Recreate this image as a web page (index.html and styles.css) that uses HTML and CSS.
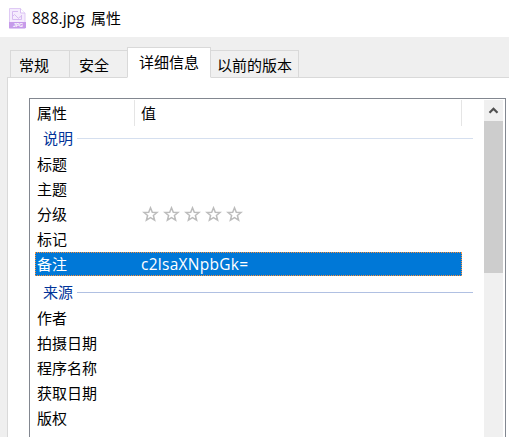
FILE: index.html
```html
<!DOCTYPE html>
<html lang="zh-CN">
<head>
<meta charset="utf-8">
<title>888.jpg 属性</title>
<link rel="stylesheet" href="styles.css">
</head>
<body>
<header class="titlebar">
  <svg class="file-icon" width="17" height="21" viewBox="0 0 17 21">
    <path d="M.5.5h11l4.500 4.500v15.500H.5z" fill="#f5ecfd" stroke="#dfcaf5"/>
    <path d="M11.500.5V5H16" fill="#fff" stroke="#d9c0f3"/>
    <path d="M12.500 7v4.500h-9v-8H9" fill="none" stroke="#d6baf1"/>
    <path d="M3.500 8.500l2-2 4 4 1.500-2 1.500 1" fill="none" stroke="#d6baf1"/>
    <path d="M0 14h17v6H0z" fill="#c69bea"/>
    <text class="icon-label" x="4" y="19">JPG</text>
  </svg>
  <span class="title"><span class="latin">888.jpg</span>属性</span>
</header>
<nav class="tabs">
  <div class="tab tab-general">常规</div>
  <div class="tab tab-security">安全</div>
  <div class="tab tab-details active">详细信息</div>
  <div class="tab tab-versions">以前的版本</div>
</nav>
<main class="pane">
  <section class="listbox">
    <div class="list">
      <div class="row head"><span class="name">属性</span><span class="value">值</span></div>
      <div class="group"><span>说明</span></div>
      <div class="row"><span class="name">标题</span></div>
      <div class="row"><span class="name">主题</span></div>
      <div class="row"><span class="name">分级</span><span class="value stars">
        <svg width="103" height="16" viewBox="0 0 103 16">
          <defs><path id="star" d="M9.500 1.800L11.300 6.300 16 6.500 12.400 9.500 13.600 14.100 9.500 11.600 5.400 14.100 6.600 9.500 3 6.500 7.700 6.300z"/></defs>
          <use href="#star"/><use href="#star" x="21"/><use href="#star" x="42"/><use href="#star" x="63"/><use href="#star" x="84"/>
        </svg></span></div>
      <div class="row"><span class="name">标记</span></div>
      <div class="row selected"><span class="name">备注</span><span class="value code">c2lsaXNpbGk=</span></div>
      <div class="group second"><span>来源</span></div>
      <div class="row"><span class="name">作者</span></div>
      <div class="row"><span class="name">拍摄日期</span></div>
      <div class="row"><span class="name">程序名称</span></div>
      <div class="row"><span class="name">获取日期</span></div>
      <div class="row"><span class="name">版权</span></div>
    </div>
    <div class="scrollbar">
      <div class="arrow"><svg width="19" height="21" viewBox="0 0 19 21"><path d="M5.500 12.800L9.500 8.800l4 4" fill="none" stroke="#505050" stroke-width="2.200"/></svg></div>
      <div class="thumb"></div>
    </div>
  </section>
</main>
</body>
</html>
```
FILE: styles.css
```css
* { box-sizing: border-box; }
body {
  margin: 0;
  width: 509px;
  height: 437px;
  overflow: hidden;
  background: #efefef;
  color: #000;
  font: 15px/23px "Noto Sans CJK SC", sans-serif;
  display: flex;
  flex-direction: column;
}
.titlebar {
  flex: none;
  height: 37px;
  background: #fff;
  display: flex;
  align-items: center;
  padding-left: 9px;
}
.file-icon { margin-top: -1px; }
.icon-label { font: italic bold 5px "Liberation Sans", sans-serif; fill: #fff; }
.title { margin: -2px 0 0 6px; display: flex; }
.latin { width: 59px; font-family: "Open Sans", sans-serif; font-size: 15.500px; line-height: 24px; }
.tabs {
  flex: none;
  height: 41px;
  display: flex;
  align-items: flex-end;
  padding-left: 10px;
  position: relative;
  z-index: 1;
}
.tab {
  height: 28px;
  border: 1px solid #d9d9d9;
  border-left-width: 0;
  background: #f0f0f0;
  line-height: 27px;
  white-space: nowrap;
}
.tab-general { width: 60px; border-left-width: 1px; padding-left: 8px; }
.tab-security { width: 57px; padding-left: 9px; border-right: 0; }
.tab-details { width: 84px; height: 31px; padding-left: 11px; border-left-width: 1px; }
.tab-versions { width: 88px; padding-left: 6px; }
.active { background: #fff; border-bottom-color: #fff; line-height: 28px; }
.pane {
  flex: 1;
  min-height: 0;
  margin: -1px 0 0 7px;
  border: solid #d9d9d9;
  border-width: 1px 0 0 1px;
  background: #fff;
  padding: 20px 3px 0 21px;
}
.listbox {
  height: 100%;
  border: solid #828790;
  border-width: 1px 1px 0 1px;
  padding: 1px 1px 0 5px;
  display: flex;
  justify-content: space-between;
  overflow: hidden;
}
.list { width: 438px; }
.row { height: 25px; width: 427px; display: flex; padding-left: 2px; }
.name { width: 104px; }
.head { height: 26px; line-height: 25px; border-right: 1px solid #e5e5e5; }
.head .name { width: 98px; border-right: 1px solid #e5e5e5; }
.head .value { padding-left: 6px; }
.group {
  height: 26px;
  color: #003399;
  display: flex;
  align-items: center;
  padding: 0 0 1px 8px;
}
.group span { margin: -2px 4px 0 0; }
.group::after { content: ""; flex: 1; height: 1px; background: #d5dfef; }
.second { height: 30px; padding: 1px 0 0 8px; }
.second span { margin-top: -1px; }
.second::after { background: #b0c0e2; margin-top: 2px; }
.stars svg { display: block; margin-top: 4px; fill: #fff; stroke: #bcbcbc; stroke-width: 1.500; }
.selected {
  height: 24px;
  background: #0078d7;
  color: #fff;
  border: 1px dotted #ff9035;
  padding-left: 1px;
  line-height: 22px;
}
.code { font-family: "Open Sans", sans-serif; font-size: 15.500px; line-height: 22px; letter-spacing: .28px; }
.scrollbar { width: 20px; background: #f0f0f0; border-right: 1px solid #fff; }
.arrow { height: 21px; }
.arrow svg { display: block; }
.thumb { height: 152px; width: 19px; background: #cdcdcd; }
```
